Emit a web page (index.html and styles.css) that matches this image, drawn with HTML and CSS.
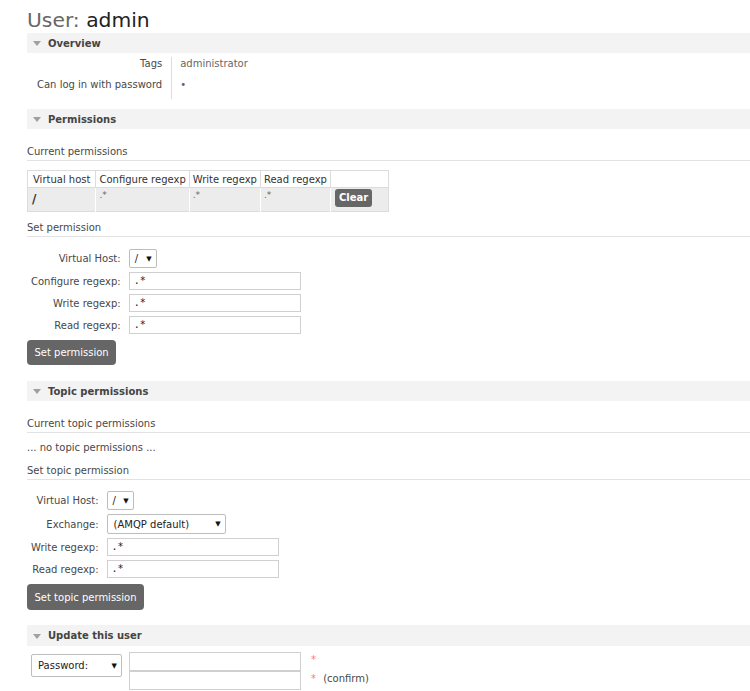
FILE: index.html
```html
<!DOCTYPE html>
<html>
<head>
<meta charset="utf-8">
<title>User: admin</title>
<link rel="stylesheet" href="styles.css">
</head>
<body>
<div class="page">
  <h1 class="title"><span class="lbl">User:</span> <span class="name">admin</span></h1>

  <div class="bar bar-first"><span class="tri"></span>Overview</div>
  <div class="kv">
    <div class="k">Tags</div><div class="v">administrator</div>
    <div class="k">Can log in with password</div><div class="v">&bull;</div>
  </div>

  <div class="bar bar-perm"><span class="tri"></span>Permissions</div>
  <h3 class="sub">Current permissions</h3>
  <table class="perms">
    <tr class="head">
      <th class="c1">Virtual host</th><th>Configure regexp</th><th>Write regexp</th><th>Read regexp</th><th class="act"></th>
    </tr>
    <tr class="row">
      <td class="vh">/</td><td class="rx">.*</td><td class="rx">.*</td><td class="rx">.*</td><td class="act"><span class="btn-small">Clear</span></td>
    </tr>
  </table>

  <h3 class="sub sub-set">Set permission</h3>
  <div class="form form-perm">
    <label>Virtual Host:</label>
    <div class="select sel-vh"><span>/</span><span class="arr">&#9660;</span></div>
    <label>Configure regexp:</label>
    <div class="input">.*</div>
    <label>Write regexp:</label>
    <div class="input">.*</div>
    <label>Read regexp:</label>
    <div class="input">.*</div>
  </div>
  <div class="btn">Set permission</div>

  <div class="bar bar-topic"><span class="tri"></span>Topic permissions</div>
  <h3 class="sub">Current topic permissions</h3>
  <p class="none">... no topic permissions ...</p>
  <h3 class="sub sub-set2">Set topic permission</h3>
  <div class="form form-topic">
    <label>Virtual Host:</label>
    <div class="select sel-vh"><span>/</span><span class="arr">&#9660;</span></div>
    <label>Exchange:</label>
    <div class="select sel-ex"><span>(AMQP default)</span><span class="arr">&#9660;</span></div>
    <label>Write regexp:</label>
    <div class="input">.*</div>
    <label>Read regexp:</label>
    <div class="input">.*</div>
  </div>
  <div class="btn">Set topic permission</div>

  <div class="bar bar-update"><span class="tri"></span>Update this user</div>
  <div class="pw">
    <div class="select sel-pw"><span>Password:</span><span class="arr">&#9660;</span></div>
    <div class="pw-inputs">
      <div class="input empty"></div>
      <div class="input empty"></div>
    </div>
    <div class="pw-marks">
      <div class="mark"><span class="star">*</span></div>
      <div class="mark"><span class="star">*</span> <span class="confirm">(confirm)</span></div>
    </div>
  </div>
</div>
</body>
</html>
```

FILE: styles.css
```css
* { box-sizing: border-box; }

body {
  margin: 0;
  background: #fff;
  font-family: "DejaVu Sans", Verdana, sans-serif;
  font-size: 10px;
  color: #484848;
}

.page {
  padding-left: 27px;
}

.title {
  margin: 0;
  padding-top: 8px;
  font-size: 20.3px;
  line-height: 24px;
  font-weight: normal;
}
.title .lbl { color: #666; }
.title .name { color: #222; }

.bar {
  height: 20px;
  background: #f3f3f3;
  display: flex;
  align-items: center;
  gap: 7px;
  padding-left: 6px;
  font-weight: bold;
  color: #444;
}
.tri {
  width: 0;
  height: 0;
  margin-top: 1px;
  border-left: 4px solid transparent;
  border-right: 4px solid transparent;
  border-top: 5px solid #a0a0a0;
}
.bar-first { margin-top: 1px; }
.bar-perm { margin-top: 10px; }
.bar-topic { margin-top: 16px; }
.bar-update { margin-top: 15px; height: 21px; }

.kv {
  display: grid;
  grid-template-columns: max-content max-content;
  margin-top: 4px;
  margin-left: 10px;
}
.kv .k {
  text-align: right;
  line-height: 14px;
  height: 21px;
  padding-right: 9px;
}
.kv .v {
  line-height: 14px;
  height: 21px;
  padding-left: 8px;
  border-left: 1px solid #ddd;
  color: #666;
}

.sub {
  margin: 16px 0 0;
  font-size: 10px;
  font-weight: normal;
  line-height: 14px;
  padding-bottom: 1px;
  border-bottom: 1px solid #e2e2e2;
  color: #484848;
}
.sub-set { margin-top: 9px; }
.sub-set2 { margin-top: 9px; }

.none {
  margin: 8px 0 0;
  line-height: 14px;
}

.perms {
  margin-top: 9px;
  border-collapse: collapse;
  border: 1px solid #dcdcdc;
}
.perms th {
  height: 17px;
  padding: 0 3px;
  font-weight: normal;
  text-align: left;
  border-right: 1px solid #dcdcdc;
  background: #fff;
  color: #333;
  white-space: nowrap;
}
.perms th.c1 { padding: 0 5px; }
.perms th.act { width: 58px; border-right: none; }
.perms .row td {
  background: #ececec;
  height: 24px;
  padding: 0 3px;
  vertical-align: top;
  border-right: 1px solid #fff;
  border-top: 1px solid #dcdcdc;
}
.perms .row td.vh {
  font-weight: bold;
  font-size: 12px;
  line-height: 18px;
  padding: 2px 4px 0;
  color: #333;
}
.perms .row td.rx {
  font-size: 9px;
  line-height: 12px;
  padding-top: 1px;
  color: #666;
}
.perms .row td.act {
  padding: 1px 3px 0 4px;
  border-right: none;
}
.btn-small {
  display: inline-block;
  height: 18px;
  line-height: 18px;
  padding: 0 4px;
  background: #666;
  color: #fff;
  font-weight: bold;
  border-radius: 3px;
}

.form {
  display: grid;
  grid-template-columns: max-content max-content;
  column-gap: 8px;
  row-gap: 4px;
  align-items: center;
  padding-left: 4px;
}
.form label {
  text-align: right;
}
.form-perm { margin-top: 12px; }
.form-topic { margin-top: 11px; }

.input {
  width: 172px;
  height: 18px;
  border: 1px solid #d0d0d0;
  padding: 0 4px;
  line-height: 16px;
  font-family: "DejaVu Sans Mono", monospace;
  font-size: 10px;
  color: #222;
  background: #fff;
}

.select {
  display: flex;
  align-items: center;
  justify-content: space-between;
  height: 19px;
  border: 1px solid #bdbdbd;
  border-radius: 2px;
  background: #fff;
  padding: 0 4px 0 6px;
  color: #222;
}
.select .arr {
  font-size: 7px;
  color: #111;
}
.sel-vh { width: 28px; gap: 4px; padding-left: 5px; }
.form-topic .sel-vh { width: 27px; }
.sel-ex { width: 119px; height: 20px; }
.sel-pw { width: 91px; height: 23px; }

.btn {
  display: inline-flex;
  align-items: center;
  height: 25px;
  margin-top: 6px;
  padding: 0 7.5px;
  background: #666;
  color: #fff;
  border-radius: 4px;
}
.form-topic + .btn { height: 26px; }

.pw {
  display: flex;
  align-items: flex-start;
  margin-top: 6px;
  padding-left: 4px;
}
.sel-pw { margin-top: 2px; }
.pw-inputs {
  margin-left: 7px;
  display: flex;
  flex-direction: column;
}
.pw-inputs .input { height: 19px; }
.pw-marks {
  margin-left: 10px;
  display: flex;
  flex-direction: column;
}
.mark {
  height: 19px;
  line-height: 14px;
  padding-top: 1px;
}
.star { color: #f77; }
.confirm { margin-left: 4px; color: #484848; }
```
